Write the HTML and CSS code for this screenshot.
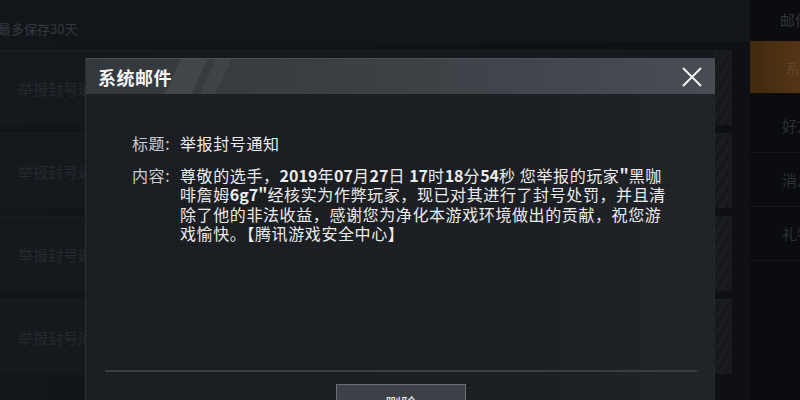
FILE: index.html
```html
<!DOCTYPE html>
<html lang="zh-CN">
<head>
    <meta charset="UTF-8">
    <meta name="viewport" content="width=device-width, initial-scale=1.0">
    <title>系统邮件</title>
    <link rel="stylesheet" href="styles.css">
</head>
<body>
    <div class="screen">
        <div class="mail-list">
            <div class="list-hint">邮件最多保存30天</div>
            <div class="mail-item">举报封号通知</div>
            <div class="mail-item">举报封号通知</div>
            <div class="mail-item">举报封号通知</div>
            <div class="mail-item">举报封号通知</div>
        </div>

        <div class="tabs">
            <div class="tabs-title">邮件</div>
            <div class="tab active">系统</div>
            <div class="tab">好友</div>
            <div class="tab">消息</div>
            <div class="tab">礼物</div>
        </div>

        <div class="dialog">
            <div class="dialog-header">
                <h1>系统邮件</h1>
                <button class="close-button">
                    <svg width="20" height="20" viewBox="0 0 20 20">
                        <path d="M1 1 L19 19 M19 1 L1 19" stroke="#f2f2f2" stroke-width="2" fill="none"/>
                    </svg>
                </button>
            </div>

            <div class="dialog-body">
                <div class="field">
                    <span class="field-label">标题:</span>
                    <span class="field-value">举报封号通知</span>
                </div>
                <div class="field">
                    <span class="field-label">内容:</span>
                    <span class="field-value">尊敬的选手，<b>2019</b>年<b>07</b>月<b>27</b>日 <b>17</b>时<b>18</b>分<b>54</b>秒 您举报的玩家<b>"</b>黑咖啡詹姆<b>6g7"</b>经核实为作弊玩家，现已对其进行了封号处罚，并且清除了他的非法收益，感谢您为净化本游戏环境做出的贡献，祝您游戏愉快。【腾讯游戏安全中心】</span>
                </div>
            </div>

            <div class="dialog-footer">
                <button class="action-button">删除</button>
            </div>
        </div>
    </div>
</body>
</html>
```

FILE: styles.css
```css
* {
    margin: 0;
    padding: 0;
    box-sizing: border-box;
}

body {
    font-family: "Noto Sans CJK SC", "Noto Sans", sans-serif;
    background: #0c0e11;
    width: 800px;
    height: 400px;
    overflow: hidden;
}

.screen {
    position: relative;
    display: flex;
    width: 800px;
    height: 400px;
    overflow: hidden;
}

/* mail list behind the dialog */
.mail-list {
    width: 750px;
    display: flex;
    flex-direction: column;
    gap: 8px;
    overflow: hidden;
    background: linear-gradient(90deg, #12151a 0%, #0e1014 100%);
}

.list-hint {
    height: 42px;
    padding-top: 19px;
    margin-left: -28px;
    font-size: 13px;
    color: #343940;
    background: #121519;
    white-space: nowrap;
}

.mail-item {
    width: 732px;
    height: 75px;
    flex-shrink: 0;
    display: flex;
    align-items: center;
    padding-left: 18px;
    font-size: 15px;
    color: #262a30;
    background:
        repeating-linear-gradient(-60deg, #1a1c20 0 4px, #16181c 4px 8px) right / 17px 100% no-repeat,
        #15181d;
    border-top: 1px solid #1a1d22;
}

/* right side tabs */
.tabs {
    width: 50px;
    background: #0b0c0f;
    display: flex;
    flex-direction: column;
    overflow: hidden;
}

.tabs-title {
    height: 41px;
    padding: 9px 0 0 30px;
    font-size: 15px;
    color: #33363b;
    white-space: nowrap;
}

.tab {
    height: 54px;
    padding-left: 32px;
    display: flex;
    align-items: center;
    font-size: 15px;
    color: #2d3035;
    white-space: nowrap;
    overflow: hidden;
    border-bottom: 1px solid #15171a;
}

.tab.active {
    height: 52px;
    background: linear-gradient(90deg, #40290f 0%, #553515 100%);
    color: #5e4630;
    border-bottom: none;
    padding-left: 35px;
    margin-bottom: 6px;
}

/* dialog */
.dialog {
    position: absolute;
    left: 85px;
    top: 58px;
    width: 630px;
    height: 342px;
    overflow: hidden;
    display: flex;
    flex-direction: column;
    background:
        repeating-linear-gradient(0deg, rgba(255, 255, 255, 0.015) 0 1px, transparent 1px 4px),
        repeating-linear-gradient(90deg, rgba(255, 255, 255, 0.015) 0 1px, transparent 1px 4px),
        linear-gradient(90deg, #191c20 0%, #1a1d21 70%, #1f2227 100%);
    border-left: 1px solid #2a2e33;
}

.dialog-header {
    height: 36px;
    flex-shrink: 0;
    display: flex;
    align-items: center;
    justify-content: space-between;
    padding: 0 13px 0 12px;
    background:
        linear-gradient(115deg, transparent 0 86px, rgba(255, 255, 255, 0.06) 86px 110px, transparent 110px 118px, rgba(255, 255, 255, 0.04) 118px 132px, transparent 132px),
        linear-gradient(90deg, #33383d 0%, #3c4146 50%, #474d53 100%);
    border-top: 1px solid #4a4f55;
}

.dialog-header h1 {
    font-size: 18px;
    font-weight: 700;
    color: #f4f4f4;
    letter-spacing: 0.5px;
}

.close-button {
    background: none;
    border: none;
    width: 20px;
    height: 20px;
    display: flex;
    cursor: pointer;
}

.dialog-body {
    height: 276px;
    flex-shrink: 0;
    padding: 40px 0 0 46px;
    display: flex;
    flex-direction: column;
    gap: 12px;
}

.field {
    display: flex;
    font-size: 16px;
    line-height: 19.5px;
    letter-spacing: 0.6px;
}

.field-label {
    width: 48px;
    flex-shrink: 0;
    color: #c9ccd0;
    white-space: nowrap;
}

.field-value {
    width: 486px;
    color: #ececec;
}

.field-value b {
    font-weight: 700;
    letter-spacing: 0;
}

.dialog-footer {
    flex: 1;
    margin: 0 18px 0 19px;
    border-top: 2px solid #3a3e43;
    display: flex;
    justify-content: center;
    padding-top: 12px;
}

.action-button {
    width: 130px;
    height: 40px;
    flex-shrink: 0;
    background: #3d4147;
    border: 1px solid #6a6e74;
    color: #f0f0f0;
    font-family: inherit;
    font-size: 16px;
    padding-top: 6px;
    display: flex;
    justify-content: center;
    align-items: flex-start;
}
```
